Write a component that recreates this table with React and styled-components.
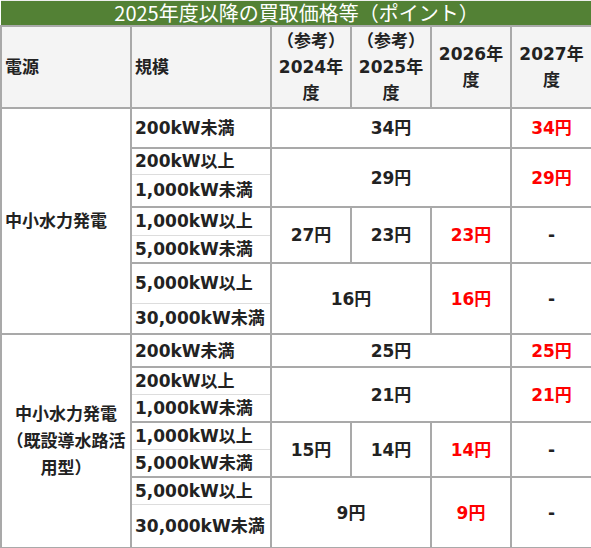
import React from "react";
import styled, { createGlobalStyle } from "styled-components";

const GlobalStyle = createGlobalStyle`
  body {
    margin: 0;
    background: #fff;
  }
`;

const Table = styled.table`
  width: 591px;
  border-collapse: collapse;
  table-layout: fixed;
  font-family: "DejaVu Sans", "Noto Sans CJK JP", sans-serif;
  font-size: 17px;
  font-weight: bold;
  color: #222;
`;

const Title = styled.th`
  height: 24px;
  padding: 0;
  background: #538135;
  color: #fff;
  font-family: "Noto Sans CJK JP", sans-serif;
  font-weight: 400;
  font-size: 20px;
  line-height: 24px;
  text-align: center;
  white-space: nowrap;
  border: none;
  border-top: 1px solid #eee;
  border-bottom: 2px solid #a9a9a9;
`;

const Row = styled.tr`
  height: ${props => props.$h}px;
`;

const Head = styled.th`
  padding: 0 3px;
  background: #f4f4f4;
  border: 2px solid #a9a9a9;
  line-height: 26px;
  font-weight: bold;
  white-space: nowrap;
  text-align: ${props => (props.$left ? "left" : "center")};
  vertical-align: middle;
`;

const Cell = styled.td`
  padding: 0 3px;
  border: 2px solid #a9a9a9;
  line-height: 20px;
  text-align: center;
  vertical-align: middle;
  white-space: nowrap;
  color: ${props => (props.$red ? "#ff0000" : "#222")};
`;

const Source = styled.td`
  padding: 0 3px;
  border: 2px solid #a9a9a9;
  line-height: 27px;
  vertical-align: middle;
  white-space: nowrap;
  text-align: ${props => (props.$center ? "center" : "left")};
`;

const Scale = styled(Cell)`
  text-align: left;
  ${props => props.$part === "top" && "border-bottom: 1px solid #ddd;"}
  ${props => props.$part === "bottom" && "border-top: 1px solid #ddd;"}
`;

const widths = [130, 140, 80, 80, 80, 81];

// each tier: scale lines with row heights, then price cells [value, colSpan, red]
const sections = [
  {
    name: ["中小水力発電"],
    center: false,
    tiers: [
      { scale: [["200kW未満", 40]], prices: [["34円", 3], ["34円", 1, true]] },
      { scale: [["200kW以上", 26], ["1,000kW未満", 33]], prices: [["29円", 3], ["29円", 1, true]] },
      { scale: [["1,000kW以上", 28], ["5,000kW未満", 28]], prices: [["27円", 1], ["23円", 1], ["23円", 1, true], ["-", 1]] },
      { scale: [["5,000kW以上", 40], ["30,000kW未満", 31]], prices: [["16円", 2], ["16円", 1, true], ["-", 1]] }
    ]
  },
  {
    name: ["中小水力発電", "（既設導水路活", "用型）"],
    center: true,
    tiers: [
      { scale: [["200kW未満", 33]], prices: [["25円", 3], ["25円", 1, true]] },
      { scale: [["200kW以上", 27], ["1,000kW未満", 28]], prices: [["21円", 3], ["21円", 1, true]] },
      { scale: [["1,000kW以上", 27], ["5,000kW未満", 28]], prices: [["15円", 1], ["14円", 1], ["14円", 1, true], ["-", 1]] },
      { scale: [["5,000kW以上", 27], ["30,000kW未満", 44]], prices: [["9円", 2], ["9円", 1, true], ["-", 1]] }
    ]
  }
];

const renderSection = (section, si) => {
  const span = section.tiers.reduce((n, t) => n + t.scale.length, 0);
  const rows = [];
  section.tiers.forEach((tier, ti) => {
    tier.scale.forEach(([label, h], li) => {
      const part = tier.scale.length > 1 ? (li === 0 ? "top" : "bottom") : null;
      rows.push(
        <Row key={`${si}-${ti}-${li}`} $h={h}>
          {ti === 0 && li === 0 && (
            <Source rowSpan={span} $center={section.center}>
              {section.name.map((line, i) => (
                <React.Fragment key={i}>
                  {i > 0 && <br />}
                  {line}
                </React.Fragment>
              ))}
            </Source>
          )}
          <Scale $part={part}>{label}</Scale>
          {li === 0 &&
            tier.prices.map(([value, cols, red], pi) => (
              <Cell key={pi} colSpan={cols} rowSpan={tier.scale.length} $red={red}>
                {value}
              </Cell>
            ))}
        </Row>
      );
    });
  });
  return rows;
};

export default function App() {
  return (
    <>
      <GlobalStyle />
      <Table>
        <colgroup>
          {widths.map((w, i) => (
            <col key={i} style={{ width: w }} />
          ))}
        </colgroup>
        <thead>
          <tr>
            <Title colSpan={6}>2025年度以降の買取価格等（ポイント）</Title>
          </tr>
          <Row $h={82}>
            <Head $left>電源</Head>
            <Head $left>規模</Head>
            <Head>
              （参考）
              <br />
              2024年
              <br />度
            </Head>
            <Head>
              （参考）
              <br />
              2025年
              <br />度
            </Head>
            <Head>
              2026年
              <br />度
            </Head>
            <Head>
              2027年
              <br />度
            </Head>
          </Row>
        </thead>
        <tbody>{sections.map(renderSection)}</tbody>
      </Table>
    </>
  );
}
